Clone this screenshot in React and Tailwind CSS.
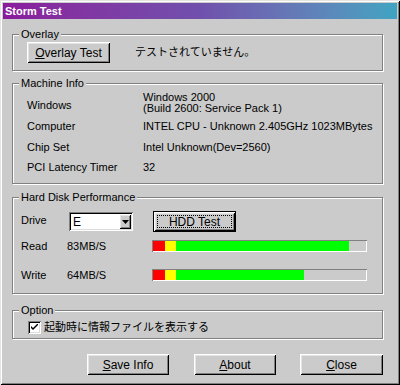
import React from 'react'

const FONT = { fontFamily: '"Liberation Sans", "Noto Sans CJK JP", sans-serif' }

// classic raised 3D button edges
const RAISED =
  'shadow-[inset_1px_1px_0_#ffffff,inset_-1px_-1px_0_#000000,inset_2px_2px_0_#e4e4e4,inset_-2px_-2px_0_#808080]'
const SUNKEN =
  'shadow-[inset_1px_1px_0_#808080,inset_-1px_-1px_0_#ffffff,inset_2px_2px_0_#000000,inset_-2px_-2px_0_#dcdcdc]'

function Group({ title, className, children }) {
  return (
    <fieldset
      className={
        'mx-[12px] w-[371px] border border-[#808080] shadow-[1px_1px_0_#ffffff,inset_1px_1px_0_#ffffff] ' +
        className
      }
    >
      <legend className="relative ml-[6px] bg-[#cbcbcb] px-[2px] text-[11px] leading-[14px]">{title}</legend>
      {children}
    </fieldset>
  )
}

function Button({ children, className = '' }) {
  return (
    <button
      type="button"
      className={'flex h-[21px] items-center justify-center bg-[#cbcbcb] text-[12px] leading-[14px] ' + RAISED + ' ' + className}
    >
      {children}
    </button>
  )
}

function Bar({ fill }) {
  return (
    <div className="flex h-[12px] w-[215px] bg-[#cbcbcb] p-[1px] shadow-[inset_1px_1px_0_#808080,inset_-1px_-1px_0_#ffffff]">
      <div className="flex h-[10px]" style={{ width: fill }}>
        <div className="h-full w-[12px] bg-[#ff0000]" />
        <div className="h-full w-[11px] bg-[#ffff00]" />
        <div className="h-full flex-1 bg-[#00ff00]" />
      </div>
    </div>
  )
}

export default function App() {
  return (
    <div
      style={FONT}
      className="h-[385px] w-[400px] overflow-hidden bg-[#cbcbcb] px-[3px] pt-[3px] text-black shadow-[inset_1px_1px_0_#e4e4e4,inset_-1px_-1px_0_#000000,inset_2px_2px_0_#ffffff,inset_-2px_-2px_0_#808080]"
    >
      <div className="flex h-[16px] items-center bg-gradient-to-r from-[#8a1a9c] via-[#7050ac] to-[#3ea4c2] pl-[2px] text-[11px] font-bold text-white">
        Storm Test
      </div>

      <div className="-mx-[3px]">
        <Group title="Overlay" className="mt-[8px] h-[44px]">
          <div className="mt-[1px] flex items-center pl-[14px]">
            <Button className="w-[83px]">
              <span>
                <span className="underline">O</span>verlay Test
              </span>
            </Button>
            <span className="ml-[25px] text-[11px]">テストされていません。</span>
          </div>
        </Group>

        <Group title="Machine Info" className="mt-[5px] h-[108px]">
          <div className="flex flex-col pl-[14px] text-[11px]">
            <div className="mt-[1px] flex h-[24px] items-center">
              <span className="w-[116px] pt-[4px]">Windows</span>
              <div className="leading-[11px]">
                <div>Windows 2000</div>
                <div>(Build 2600: Service Pack 1)</div>
              </div>
            </div>
            <div className="mt-[4px] flex h-[14px] items-center">
              <span className="w-[116px]">Computer</span>
              <span>INTEL CPU - Unknown 2.405GHz 1023MBytes</span>
            </div>
            <div className="mt-[7px] flex h-[14px] items-center">
              <span className="w-[116px]">Chip Set</span>
              <span>Intel Unknown(Dev=2560)</span>
            </div>
            <div className="mt-[6px] flex h-[14px] items-center">
              <span className="w-[116px]">PCI Latency Timer</span>
              <span>32</span>
            </div>
          </div>
        </Group>

        <Group title="Hard Disk Performance" className="mt-[6px] h-[104px]">
          <div className="flex flex-col pl-[8px] text-[11px]">
            <div className="mt-[7px] flex h-[21px] items-start">
              <span className="w-[48px] pt-[1px]">Drive</span>
              <div className={'mt-[1px] flex h-[19px] w-[64px] items-center bg-white p-[2px] ' + SUNKEN}>
                <span className="flex-1 pl-[2px] text-[12px] leading-[14px]">E</span>
                <div className={'flex h-[15px] w-[12px] items-center justify-center bg-[#cbcbcb] ' + RAISED}>
                  <svg width="7" height="4" viewBox="0 0 7 4">
                    <path d="M0 0h7L3.5 4z" fill="#000" />
                  </svg>
                </div>
              </div>
              <div className="ml-[20px] h-[21px] w-[83px] border border-black">
                <div className={'relative flex h-full w-full items-center justify-center bg-[#cbcbcb] text-[12px] leading-[12px] ' + RAISED}>
                  <div className="absolute inset-[3px] border border-dotted border-black" />
                  HDD Test
                </div>
              </div>
            </div>
            <div className="mt-[8px] flex h-[12px] items-center">
              <span className="w-[46px]">Read</span>
              <span className="w-[85px]">83MB/S</span>
              <Bar fill="196px" />
            </div>
            <div className="mt-[17px] flex h-[12px] items-center">
              <span className="w-[46px]">Write</span>
              <span className="w-[85px]">64MB/S</span>
              <Bar fill="151px" />
            </div>
          </div>
        </Group>

        <Group title="Option" className="mt-[9px] h-[36px]">
          <div className="mt-[2px] flex items-center pl-[15px] text-[11px]">
            <div className={'flex h-[13px] w-[13px] items-center justify-center bg-white ' + SUNKEN}>
              <svg width="7" height="7" viewBox="0 0 7 7">
                <path d="M0 2v2l2 2 5-5V-1L2 4z" fill="#000" />
              </svg>
            </div>
            <span className="ml-[3px]">起動時に情報ファイルを表示する</span>
          </div>
        </Group>

        <div className="mt-[15px] flex pl-[87px]">
          <Button className="w-[82px]">
            <span>
              <span className="underline">S</span>ave Info
            </span>
          </Button>
          <Button className="ml-[25px] w-[82px]">
            <span>
              <span className="underline">A</span>bout
            </span>
          </Button>
          <Button className="ml-[24px] w-[83px]">
            <span>
              <span className="underline">C</span>lose
            </span>
          </Button>
        </div>
      </div>
    </div>
  )
}
